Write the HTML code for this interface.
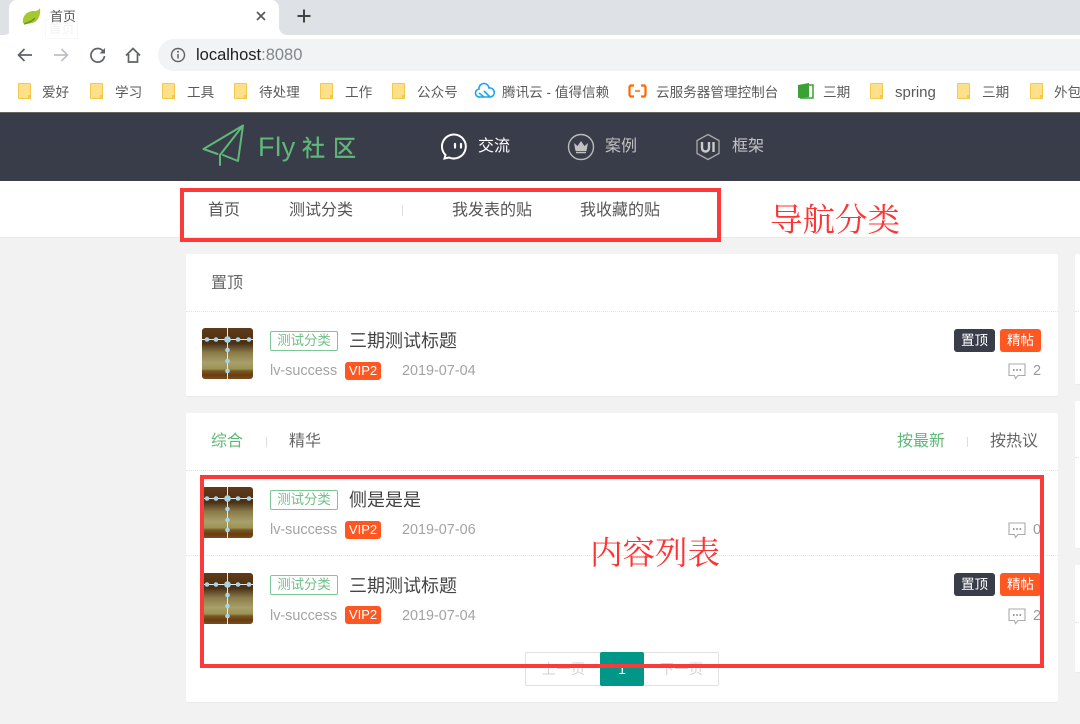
<!DOCTYPE html>
<html lang="zh"><head><meta charset="utf-8"><title>首页</title>
<style>
*{box-sizing:border-box}
html,body{margin:0;padding:0}
body{width:1080px;height:724px;position:relative;overflow:hidden;background:#f2f2f2;font-family:"Liberation Sans","Noto Sans CJK SC",sans-serif;color:#333}
.a{position:absolute;white-space:nowrap}
.bm{font-size:13.6px;color:#5a5a5a;top:85px;line-height:16px}
.f{position:absolute;top:83px;width:13px;height:16px;background:#ffe08a;border:1.5px solid #f2c94c;border-radius:1px}
.f:after{content:"";position:absolute;right:-1px;bottom:-1px;width:3px;height:4px;background:#f2c94c}
.card{position:absolute;background:#fff;border-radius:2px;box-shadow:0 1px 1px rgba(0,0,0,.03)}
.ln{position:absolute;height:1px;border-top:1px dotted #e4e4e4}
.cat{position:absolute;width:68px;height:20px;border:1px solid #7cc795;border-radius:2px;color:#6fbf88;font-size:13.4px;line-height:18px;text-align:center;background:#fff}
.ttl{font-size:18px;color:#444;line-height:22px}
.gr{color:#a3a3a3;font-size:14.4px;line-height:18px}
.vip{position:absolute;width:36px;height:18px;background:#ff5722;color:#fff;font-size:13px;line-height:18px;text-align:center;border-radius:3px}
.tag{position:absolute;width:41px;height:23px;border-radius:3px;color:#fff;font-size:13.5px;line-height:23px;text-align:center}
.red{position:absolute;border:4px solid #fb3a3a}
.rt{font-size:32.5px;color:#f33;line-height:40px;font-family:"Liberation Serif","Noto Serif CJK SC",serif}
.lg{color:#5fb878;font-size:23px;line-height:30px;-webkit-text-stroke:.4px #5fb878}
svg{position:absolute;overflow:visible}
</style></head><body>

<!-- Browser chrome -->
<div class="a" style="left:0;top:0;width:1080px;height:12px;background:#dee1e6"></div>
<div class="a" style="left:0;top:0;width:12px;height:35px;background:#dee1e6;border-bottom-right-radius:8px"></div>
<div class="a" style="left:279px;top:0;width:801px;height:35px;background:#dee1e6;border-bottom-left-radius:8px"></div>
<div class="a" style="left:0;top:12px;width:1080px;height:100px;background:#fff;z-index:-1"></div>
<div class="a" style="left:9px;top:0;width:270px;height:35px;background:#fff;border-radius:8px 8px 0 0"></div>
<svg style="left:22px;top:7px" width="20" height="19" viewBox="0 0 20 19"><path d="M1 16C0 9 5 4 12 4c3 0 5-1 6-3 1 7-2 14-8 15-4 1-7 1-9 0z" fill="#a5c82d"/><path d="M2 17c3-1 8-2 11-6" stroke="#5e9c2a" stroke-width="1.5" fill="none"/></svg>
<div class="a" style="left:45px;top:19px;width:33px;height:20px;border:1px solid #f8f8f8;color:#f2f2f2;font-size:13px;line-height:18px;text-align:center">首页</div>
<div class="a" style="left:50px;top:8px;font-size:13px;line-height:18px;color:#555">首页</div>
<svg style="left:254px;top:9px" width="14" height="14" viewBox="0 0 14 14"><path d="M3 3l8 8M11 3l-8 8" stroke="#555" stroke-width="1.600"/></svg>
<svg style="left:294px;top:6px" width="20" height="20" viewBox="0 0 20 20"><path d="M10 3.500v13M3.500 10h13" stroke="#444" stroke-width="2"/></svg>

<svg style="left:16px;top:46px" width="18" height="18" viewBox="0 0 18 18"><path d="M16 9H2.500M8.500 3L2.500 9l6 6" stroke="#5f6368" stroke-width="1.700" fill="none"/></svg>
<svg style="left:52px;top:46px" width="18" height="18" viewBox="0 0 18 18"><path d="M2 9h13.500M9.500 3l6 6-6 6" stroke="#bdc1c6" stroke-width="1.700" fill="none"/></svg>
<svg style="left:89px;top:46px" width="18" height="18" viewBox="0 0 18 18"><path d="M14 5A6.800 6.800 0 1 0 15.500 10" stroke="#5f6368" stroke-width="1.700" fill="none"/><path d="M16 2v5.500h-5.500z" fill="#5f6368"/></svg>
<svg style="left:124px;top:46px" width="18" height="18" viewBox="0 0 18 18"><path d="M2 9.500L9 2.500l7 7M4.500 8v8h9V8" stroke="#5f6368" stroke-width="1.700" fill="none"/></svg>
<div class="a" style="left:158px;top:39px;width:922px;height:32px;background:#f1f3f4;border-radius:16px 0 0 16px"></div>
<svg style="left:170px;top:47px" width="16" height="16" viewBox="0 0 16 16"><circle cx="8" cy="8" r="6.500" stroke="#5f6368" stroke-width="1.400" fill="none"/><path d="M8 7v4.500" stroke="#5f6368" stroke-width="1.500"/><circle cx="8" cy="4.800" r="1" fill="#5f6368"/></svg>
<div class="a" style="left:196px;top:45px;font-size:16.500px;line-height:20px;color:#202124">localhost<span style="color:#80868b">:8080</span></div>

<i class="f" style="left:18px"></i><div class="a bm" style="left:42px">爱好</div>
<i class="f" style="left:90px"></i><div class="a bm" style="left:115px">学习</div>
<i class="f" style="left:162px"></i><div class="a bm" style="left:187px">工具</div>
<i class="f" style="left:234px"></i><div class="a bm" style="left:259px">待处理</div>
<i class="f" style="left:320px"></i><div class="a bm" style="left:345px">工作</div>
<i class="f" style="left:392px"></i><div class="a bm" style="left:417px">公众号</div>
<svg style="left:475px;top:84px" width="20" height="14" viewBox="0 0 20 14"><path d="M5 13a4 4 0 0 1-1-8 5 5 0 0 1 10-1 4.500 4.500 0 0 1 1.500 9zM4 9l5 4M9 7l6 6" stroke="#1ea6e8" stroke-width="1.600" fill="none"/></svg>
<div class="a bm" style="left:502px">腾讯云 - 值得信赖</div>
<svg style="left:628px;top:84px" width="20" height="14" viewBox="0 0 20 14"><path d="M6 1.500H2.500L1.500 3v8l1 1.500H6M13 1.500h3.500l1 1.500v8l-1 1.500H13" stroke="#ff6a00" stroke-width="2.200" fill="none"/><path d="M7 7h5" stroke="#ff6a00" stroke-width="1.500"/></svg>
<div class="a bm" style="left:656px">云服务器管理控制台</div>
<svg style="left:797px;top:82px" width="18" height="17" viewBox="0 0 18 17"><path d="M1 3l11-2v14l-11 1z" fill="#3aa135"/><path d="M12 3h4v13H3" fill="none" stroke="#3aa135" stroke-width="1.500"/></svg>
<div class="a bm" style="left:823px">三期</div>
<i class="f" style="left:870px"></i><div class="a bm" style="left:895px;font-size:15px">spring</div>
<i class="f" style="left:957px"></i><div class="a bm" style="left:982px">三期</div>
<i class="f" style="left:1030px"></i><div class="a bm" style="left:1054px">外包</div>

<!-- Site header -->
<div class="a" style="left:0;top:112px;width:1080px;height:69px;background:#393d49;border-top:1px solid #666"></div>
<svg style="left:0;top:0" width="1080" height="200"><path d="M243 125.500L203.500 149l14 5M243 125.500L220 155v10M243 125.500L238 161l-15-6" fill="none" stroke="#5fb878" stroke-width="2" stroke-linejoin="round" stroke-linecap="round"/></svg>
<div class="a lg" style="left:258px;top:132px;font-size:27px;letter-spacing:.6px;-webkit-text-stroke:0">Fly</div>
<div class="a lg" style="left:302px;top:133px">社</div>
<div class="a lg" style="left:333px;top:133px">区</div>

<svg style="left:440px;top:133px" width="28" height="27" viewBox="0 0 28 27"><path d="M14 1.500a12 12 0 1 1-5 23l-4.500 1 1-3.500a12 12 0 0 1 8.500-20.500z" fill="none" stroke="#fff" stroke-width="2"/><path d="M15 11v3.500M21 11v3.500" stroke="#fff" stroke-width="2.200" stroke-linecap="round"/></svg>
<div class="a" style="left:478px;top:137px;font-size:16px;line-height:20px;color:#fff">交流</div>
<svg style="left:567px;top:133px" width="28" height="28" viewBox="0 0 28 28"><circle cx="14" cy="14" r="12.500" fill="none" stroke="#bbb" stroke-width="1.400"/><path d="M7 10l3.500 3L14 8l3.500 5L21 10l-1.500 8h-11z" fill="#c2c2c2"/><path d="M9 19.500h10" stroke="#c2c2c2" stroke-width="1.500"/></svg>
<div class="a" style="left:605px;top:137px;font-size:16px;line-height:20px;color:#c2c2c2">案例</div>
<svg style="left:695px;top:133px" width="26" height="28" viewBox="0 0 26 28"><path d="M13 1.500L24 7.500v13L13 26.500 2 20.500v-13z" fill="none" stroke="#aaa" stroke-width="1.300"/><path d="M7 9v6a3.500 3.500 0 0 0 7 0V9" fill="none" stroke="#ccc" stroke-width="2.400"/><path d="M18.500 9v10" stroke="#ccc" stroke-width="2.400"/></svg>
<div class="a" style="left:732px;top:137px;font-size:16px;line-height:20px;color:#c2c2c2">框架</div>

<!-- Sub nav -->
<div class="a" style="left:0;top:181px;width:1080px;height:57px;background:#fff;border-bottom:1px solid #e9e9e9"></div>
<div class="a" style="left:208px;top:201px;font-size:16px;line-height:20px;color:#555">首页</div>
<div class="a" style="left:289px;top:201px;font-size:16px;line-height:20px;color:#555">测试分类</div>
<div class="a" style="left:402px;top:205px;width:1px;height:11px;background:#ddd"></div>
<div class="a" style="left:452px;top:201px;font-size:16px;line-height:20px;color:#555">我发表的贴</div>
<div class="a" style="left:580px;top:201px;font-size:16px;line-height:20px;color:#555">我收藏的贴</div>

<!-- Card 1 -->
<div class="card" style="left:186px;top:254px;width:872px;height:142px"></div>
<div class="ln" style="left:186px;top:311px;width:872px"></div>
<div class="a" style="left:211px;top:274px;font-size:16px;line-height:20px;color:#666">置顶</div>

<!-- Card 2 -->
<div class="card" style="left:186px;top:413px;width:872px;height:289px"></div>
<div class="ln" style="left:186px;top:470px;width:872px"></div>
<div class="ln" style="left:186px;top:555px;width:872px"></div>
<div class="a" style="left:211px;top:432px;font-size:16px;line-height:20px;color:#5fb878">综合</div>
<div class="a" style="left:266px;top:437px;width:1px;height:10px;background:#ddd"></div>
<div class="a" style="left:289px;top:432px;font-size:16px;line-height:20px;color:#666">精华</div>
<div class="a" style="left:897px;top:432px;font-size:16px;line-height:20px;color:#5fb878">按最新</div>
<div class="a" style="left:967px;top:437px;width:1px;height:10px;background:#ddd"></div>
<div class="a" style="left:990px;top:432px;font-size:16px;line-height:20px;color:#666">按热议</div>

<!-- Right column -->
<div class="card" style="left:1075px;top:254px;width:10px;height:130px"></div>
<div class="ln" style="left:1075px;top:311px;width:10px"></div>
<div class="card" style="left:1075px;top:401px;width:10px;height:147px"></div>
<div class="ln" style="left:1075px;top:457px;width:10px"></div>
<div class="card" style="left:1075px;top:565px;width:10px;height:107px"></div>
<div class="ln" style="left:1075px;top:622px;width:10px"></div>

<!-- Row 1 -->
<svg style="left:202px;top:328px" width="52" height="52" viewBox="0 0 52 52"><defs><linearGradient id="s" x1="0" y1="0" x2="0" y2="1"><stop offset="0" stop-color="#5f3a18"/><stop offset=".3" stop-color="#4a3016"/><stop offset=".48" stop-color="#8a7a48"/><stop offset=".68" stop-color="#a8a06a"/><stop offset=".8" stop-color="#9a9455"/><stop offset=".84" stop-color="#7a5a22"/><stop offset=".92" stop-color="#6a3d12"/><stop offset="1" stop-color="#7a4d1c"/></linearGradient></defs><rect width="51" height="51" rx="3" fill="url(#s)"/><path d="M25.500 0v51M0 11.500h51" stroke="#e4ebe8" stroke-width="1"/><g fill="#a8d4e4"><circle cx="5" cy="11.500" r="2.300"/><circle cx="14" cy="11.500" r="2.300"/><circle cx="25.500" cy="11.500" r="3.300"/><circle cx="36" cy="11.500" r="2.300"/><circle cx="47" cy="11.500" r="2.300"/><circle cx="25.500" cy="22" r="2.300"/><circle cx="25.500" cy="33" r="2.300"/><circle cx="25.500" cy="43" r="2.300"/></g></svg>
<div class="cat" style="left:270px;top:331px">测试分类</div>
<div class="a ttl" style="left:349px;top:330px">三期测试标题</div>
<div class="a gr" style="left:270px;top:362px">lv-success</div>
<div class="vip" style="left:345px;top:362px">VIP2</div>
<div class="a gr" style="left:402px;top:362px">2019-07-04</div>
<div class="tag" style="left:954px;top:329px;background:#393d49">置顶</div>
<div class="tag" style="left:1000px;top:329px;background:#ff5722">精帖</div>
<svg style="left:1008px;top:363px" width="18" height="17" viewBox="0 0 18 17"><path d="M1 1h16v11.500H10l-2.500 3-1-3H1z" fill="none" stroke="#aaa" stroke-width="1.100"/><path d="M5 7h1.500M8.300 7h1.500M11.600 7h1.500" stroke="#888" stroke-width="1.700"/></svg>
<div class="a" style="left:1033px;top:362px;font-size:14.5px;line-height:18px;color:#999">2</div>

<!-- Row 2 -->
<svg style="left:202px;top:487px" width="52" height="52" viewBox="0 0 52 52"><rect width="51" height="51" rx="3" fill="url(#s)"/><path d="M25.500 0v51M0 11.500h51" stroke="#e4ebe8" stroke-width="1"/><g fill="#a8d4e4"><circle cx="5" cy="11.500" r="2.300"/><circle cx="14" cy="11.500" r="2.300"/><circle cx="25.500" cy="11.500" r="3.300"/><circle cx="36" cy="11.500" r="2.300"/><circle cx="47" cy="11.500" r="2.300"/><circle cx="25.500" cy="22" r="2.300"/><circle cx="25.500" cy="33" r="2.300"/><circle cx="25.500" cy="43" r="2.300"/></g></svg>
<div class="cat" style="left:270px;top:490px">测试分类</div>
<div class="a ttl" style="left:349px;top:489px">侧是是是</div>
<div class="a gr" style="left:270px;top:521px">lv-success</div>
<div class="vip" style="left:345px;top:521px">VIP2</div>
<div class="a gr" style="left:402px;top:521px">2019-07-06</div>
<svg style="left:1008px;top:522px" width="18" height="17" viewBox="0 0 18 17"><path d="M1 1h16v11.500H10l-2.500 3-1-3H1z" fill="none" stroke="#aaa" stroke-width="1.100"/><path d="M5 7h1.500M8.300 7h1.500M11.600 7h1.500" stroke="#888" stroke-width="1.700"/></svg>
<div class="a" style="left:1033px;top:521px;font-size:14.5px;line-height:18px;color:#999">0</div>

<!-- Row 3 -->
<svg style="left:202px;top:573px" width="52" height="52" viewBox="0 0 52 52"><rect width="51" height="51" rx="3" fill="url(#s)"/><path d="M25.500 0v51M0 11.500h51" stroke="#e4ebe8" stroke-width="1"/><g fill="#a8d4e4"><circle cx="5" cy="11.500" r="2.300"/><circle cx="14" cy="11.500" r="2.300"/><circle cx="25.500" cy="11.500" r="3.300"/><circle cx="36" cy="11.500" r="2.300"/><circle cx="47" cy="11.500" r="2.300"/><circle cx="25.500" cy="22" r="2.300"/><circle cx="25.500" cy="33" r="2.300"/><circle cx="25.500" cy="43" r="2.300"/></g></svg>
<div class="cat" style="left:270px;top:575px">测试分类</div>
<div class="a ttl" style="left:349px;top:575px">三期测试标题</div>
<div class="a gr" style="left:270px;top:607px">lv-success</div>
<div class="vip" style="left:345px;top:606px">VIP2</div>
<div class="a gr" style="left:402px;top:607px">2019-07-04</div>
<div class="tag" style="left:954px;top:573px;background:#393d49">置顶</div>
<div class="tag" style="left:1000px;top:573px;background:#ff5722">精帖</div>
<svg style="left:1008px;top:608px" width="18" height="17" viewBox="0 0 18 17"><path d="M1 1h16v11.500H10l-2.500 3-1-3H1z" fill="none" stroke="#aaa" stroke-width="1.100"/><path d="M5 7h1.500M8.300 7h1.500M11.600 7h1.500" stroke="#888" stroke-width="1.700"/></svg>
<div class="a" style="left:1033px;top:607px;font-size:14.5px;line-height:18px;color:#999">2</div>

<!-- Pagination -->
<div class="a" style="left:525px;top:652px;width:194px;height:34px;border:1px solid #e2e2e2;border-radius:2px;background:#fff"></div>
<div class="a" style="left:542px;top:660px;font-size:14px;line-height:18px;color:#d2d2d2;letter-spacing:.5px">上一页</div>
<div class="a" style="left:600px;top:652px;width:44px;height:34px;background:#009688;border-radius:2px;color:#fff;font-size:14px;line-height:34px;text-align:center">1</div>
<div class="a" style="left:660px;top:660px;font-size:14px;line-height:18px;color:#d2d2d2;letter-spacing:.5px">下一页</div>

<!-- Red annotations -->
<div class="red" style="left:180px;top:188px;width:541px;height:54px"></div>
<div class="a rt" style="left:770px;top:201px">导航分类</div>
<div class="red" style="left:200px;top:475px;width:844px;height:193px"></div>
<div class="a rt" style="left:590px;top:534px">内容列表</div>
</body></html>
